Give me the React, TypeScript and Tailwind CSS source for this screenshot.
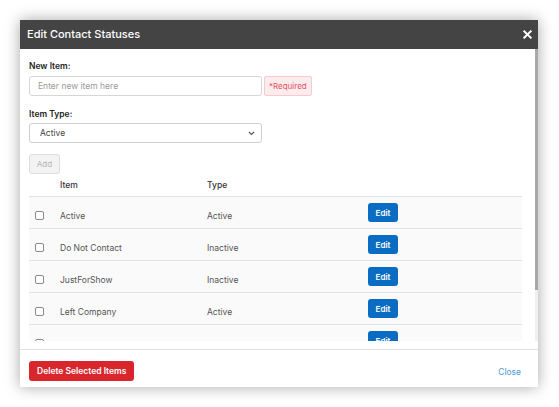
import React from 'react';

const rows = [
  { item: 'Active', type: 'Active' },
  { item: 'Do Not Contact', type: 'Inactive' },
  { item: 'JustForShow', type: 'Inactive' },
  { item: 'Left Company', type: 'Active' },
  { item: '', type: '' },
];

const font = { fontFamily: 'Inter, "Noto Sans", sans-serif' };

export default function App() {
  return (
    <div className="w-[559px] h-[407px] bg-white pt-5 pl-5 overflow-hidden" style={font}>
      <div className="w-[518px] bg-white shadow-[0_0_14px_rgba(0,0,0,0.35)] flex flex-col">
        {/* Header */}
        <div className="h-[29px] bg-[#444444] flex items-center justify-between pl-[7px] pr-[7px]">
          <span className="text-white text-[11px] font-medium">Edit Contact Statuses</span>
          <svg width="9" height="9" viewBox="0 0 10 10" className="mr-[-1px]">
            <path d="M1.5 1.5 L8.5 8.5 M8.5 1.5 L1.5 8.5" stroke="#fff" strokeWidth="2.2" strokeLinecap="square" />
          </svg>
        </div>

        {/* Body */}
        <div className="flex h-[292px]">
          <div className="flex-1 overflow-hidden pl-[9px] pr-[13px] pt-[11px]">
            <div className="text-[8.5px] font-semibold text-[#222] leading-[12px]">New Item:</div>
            <div className="flex items-center gap-[2px] mt-[4px]">
              <div className="w-[233px] h-[20px] border border-[#d6d6d6] rounded-[3px] flex items-center pl-[8px] text-[8.5px] text-[#9a9a9a]">
                Enter new item here
              </div>
              <div className="h-[20px] px-[4px] bg-[#fdecee] border border-[#f8c9cf] rounded-[2px] flex items-center text-[8px] text-[#e0505e]">
                *Required
              </div>
            </div>

            <div className="text-[8.5px] font-semibold text-[#222] leading-[12px] mt-[12px]">Item Type:</div>
            <div className="w-[233px] h-[20px] mt-[3px] border border-[#cfcfcf] rounded-[3px] flex items-center justify-between pl-[10px] pr-[6px] text-[8.5px] text-[#444]">
              <span>Active</span>
              <svg width="7" height="5" viewBox="0 0 7 5">
                <path d="M1 1 L3.5 3.5 L6 1" fill="none" stroke="#555" strokeWidth="1.1" />
              </svg>
            </div>

            <div className="mt-[11px] w-[31px] h-[20px] bg-[#f3f3f3] border border-[#dddddd] rounded-[3px] flex items-center justify-center text-[8px] text-[#b5b5b5]">
              Add
            </div>

            {/* Table */}
            <div>
              <div className="grid grid-cols-[31px_147px_161px_1fr] h-[23px] items-center border-b border-[#e2e2e2] text-[8.5px] text-[#333] font-medium">
                <span />
                <span>Item</span>
                <span>Type</span>
                <span />
              </div>
              {rows.map((r, i) => (
                <div
                  key={i}
                  className="grid grid-cols-[31px_147px_161px_1fr] h-[32px] items-center border-b border-[#e2e2e2] bg-[#fafafa] text-[8.5px] text-[#555]"
                >
                  <span className="pl-[6px] mt-[6px]">
                    <span className="block w-[9px] h-[9px] border border-[#888] rounded-[2px] bg-white" />
                  </span>
                  <span className="mt-[8px]">{r.item}</span>
                  <span className="mt-[8px]">{r.type}</span>
                  <span>
                    <span className="inline-flex items-center justify-center w-[30px] h-[19px] bg-[#0a6cc2] rounded-[3px] text-white text-[8px] font-semibold">
                      Edit
                    </span>
                  </span>
                </div>
              ))}
            </div>
          </div>
          {/* Scrollbar */}
          <div className="w-[3px] bg-[#f0f0f0] flex flex-col">
            <div className="h-[241px] bg-[#a8a8a8]" />
          </div>
        </div>

        {/* Footer */}
        <div className="mt-[8px] border-t border-[#e2e2e2] h-[38px] flex items-start justify-between pl-[9px] pr-[17px] pt-[11px]">
          <div className="h-[20px] px-[8px] bg-[#d9262c] rounded-[3px] flex items-center text-white text-[8.5px] font-semibold">
            Delete Selected Items
          </div>
          <span className="text-[8.5px] text-[#4b9ad6] mt-[5px]">Close</span>
        </div>
      </div>
    </div>
  );
}
